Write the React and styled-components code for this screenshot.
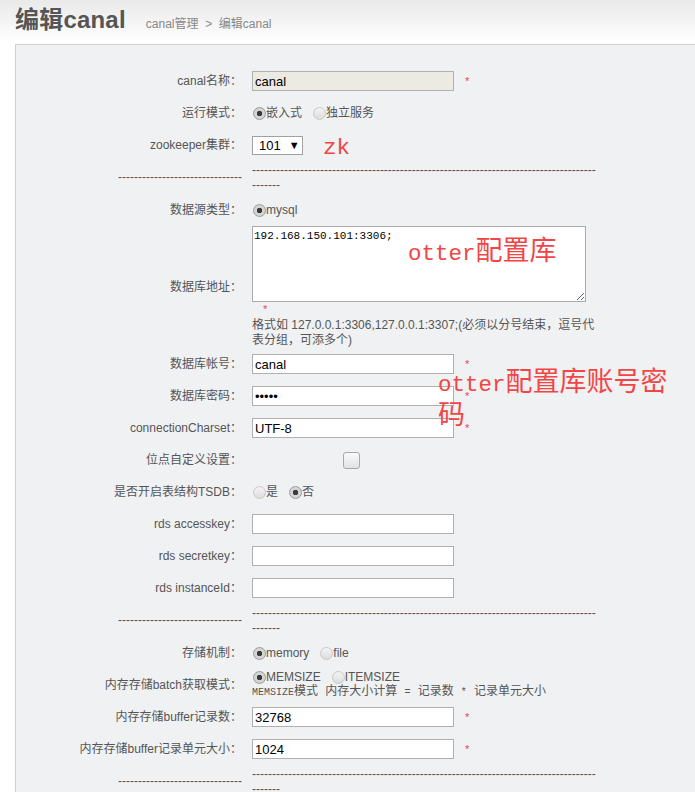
import React from 'react'
import styled, { createGlobalStyle } from 'styled-components'

const GlobalStyle = createGlobalStyle`
    html, body {
        margin: 0;
        padding: 0;
        overflow: hidden;
        background: #fff;
    }
    body {
        font-family: "Liberation Sans", "Noto Sans CJK SC", sans-serif;
        font-size: 12px;
        color: #555;
    }
`;

const SEP_LEFT = '-'.repeat(31)
const SEP_RIGHT = '-'.repeat(86)

export default function App() {
    return (
        <Page>
            <GlobalStyle />
            <Header>
                <Title>编辑canal</Title>
                <Crumbs>canal管理 &nbsp;&gt;&nbsp; 编辑canal</Crumbs>
            </Header>
            <Panel>
                <Row>
                    <Label>canal名称：</Label>
                    <Field>
                        <TextInput readOnly disabledLook defaultValue="canal" />
                        <Star>*</Star>
                    </Field>
                </Row>
                <Row>
                    <Label>运行模式：</Label>
                    <Field>
                        <Radio checked>嵌入式</Radio>
                        <Radio>独立服务</Radio>
                    </Field>
                </Row>
                <Row>
                    <Label>zookeeper集群：</Label>
                    <Field>
                        <FakeSelect>101<Arrow>▼</Arrow></FakeSelect>
                    </Field>
                </Row>
                <Separator />
                <Row>
                    <Label>数据源类型：</Label>
                    <Field>
                        <Radio checked>mysql</Radio>
                    </Field>
                </Row>
                <Row>
                    <Label>数据库地址：</Label>
                    <Field>
                        <Area readOnly defaultValue="192.168.150.101:3306;" />
                        <AreaStar>*</AreaStar>
                        <Help>格式如 127.0.0.1:3306,127.0.0.1:3307;(必须以分号结束，逗号代表分组，可添多个)</Help>
                    </Field>
                </Row>
                <Row>
                    <Label>数据库帐号：</Label>
                    <Field>
                        <TextInput readOnly defaultValue="canal" />
                        <Star>*</Star>
                    </Field>
                </Row>
                <Row>
                    <Label>数据库密码：</Label>
                    <Field>
                        <TextInput readOnly type="password" defaultValue="canal" />
                        <Star>*</Star>
                    </Field>
                </Row>
                <Row>
                    <Label>connectionCharset：</Label>
                    <Field>
                        <TextInput readOnly defaultValue="UTF-8" />
                        <Star>*</Star>
                    </Field>
                </Row>
                <Row>
                    <Label>位点自定义设置：</Label>
                    <Field>
                        <Checkbox />
                    </Field>
                </Row>
                <Row>
                    <Label>是否开启表结构TSDB：</Label>
                    <Field>
                        <Radio>是</Radio>
                        <Radio checked>否</Radio>
                    </Field>
                </Row>
                <Row>
                    <Label>rds accesskey：</Label>
                    <Field><TextInput readOnly defaultValue="" /></Field>
                </Row>
                <Row>
                    <Label>rds secretkey：</Label>
                    <Field><TextInput readOnly defaultValue="" /></Field>
                </Row>
                <Row>
                    <Label>rds instanceId：</Label>
                    <Field><TextInput readOnly defaultValue="" /></Field>
                </Row>
                <Separator />
                <Row>
                    <Label>存储机制：</Label>
                    <Field>
                        <Radio checked>memory</Radio>
                        <Radio>file</Radio>
                    </Field>
                </Row>
                <Row>
                    <Label>内存存储batch获取模式：</Label>
                    <Field>
                        <Line>
                            <Radio checked>MEMSIZE</Radio>
                            <Radio>ITEMSIZE</Radio>
                        </Line>
                        <MonoNote><Narrow>MEMSIZE</Narrow>模式 内存大小计算 <Narrow>=</Narrow> 记录数 <Narrow>*</Narrow> 记录单元大小</MonoNote>
                    </Field>
                </Row>
                <Row>
                    <Label>内存存储buffer记录数：</Label>
                    <Field>
                        <TextInput readOnly defaultValue="32768" />
                        <Star>*</Star>
                    </Field>
                </Row>
                <Row>
                    <Label>内存存储buffer记录单元大小：</Label>
                    <Field>
                        <TextInput readOnly defaultValue="1024" />
                        <Star>*</Star>
                    </Field>
                </Row>
                <Separator />
                <Row />
            </Panel>

            <Note style={{ left: 323, top: 130 }}><Latin>zk</Latin></Note>
            <Note style={{ left: 408, top: 236 }}><Latin>otter</Latin>配置库</Note>
            <Note style={{ left: 438, top: 367 }}><Latin>otter</Latin>配置库账号密<br />码</Note>
        </Page>
    )
}

function Separator() {
    return (
        <Row sep>
            <Label>{SEP_LEFT}</Label>
            <Field>{SEP_RIGHT}<br />-------</Field>
        </Row>
    )
}

function Radio({ checked, children }) {
    return (
        <RadioItem>
            <Dot checked={checked} />
            {children}
        </RadioItem>
    )
}


/** STYLED COMPONENTS */

const Page = styled.div`
    position: relative;
    min-height: 792px;
    background: linear-gradient(#e9e9e9 0, #fff 42px);
`;

const Header = styled.div`
    height: 44px;
    padding-left: 15px;
    display: flex;
    align-items: baseline;
    box-sizing: border-box;
    padding-top: 2px;
`;

const Title = styled.h1`
    margin: 0;
    font-size: 24px;
    font-weight: 700;
    color: #555;
    line-height: 36px;
    letter-spacing: 0.2px;
`;

const Crumbs = styled.span`
    margin-left: 20px;
    font-size: 12px;
    color: #888;
`;

const Panel = styled.div`
    margin-left: 15px;
    width: 760px;
    border: 1px solid #cfcfcf;
    border-right: none;
    background: #f0f1f3;
    padding-top: 20px;
    min-height: 760px;
`;

const Row = styled.div`
    display: grid;
    grid-template-columns: 226px 345px;
    column-gap: 10px;
    align-items: center;
    min-height: ${p => (p.sep ? '33px' : '32px')};
    line-height: 15px;
`;

const Label = styled.div`
    text-align: right;
    white-space: nowrap;
    color: #555;
`;

const Field = styled.div`
    display: flex;
    flex-wrap: wrap;
    align-items: center;
    color: #555;
`;

const TextInput = styled.input.withConfig({ shouldForwardProp: p => p !== 'disabledLook' })`
    box-sizing: border-box;
    width: 202px;
    height: 20px;
    margin: 0;
    padding: 0 2px;
    border: 1px solid #b0b0b0;
    background: ${p => (p.disabledLook ? '#ebebe4' : '#fff')};
    font-family: "Liberation Sans", "Noto Sans CJK SC", sans-serif;
    font-size: 13px;
    color: #000;
    outline: none;
`;

const Star = styled.span`
    margin-left: 11px;
    color: #f03c6a;
    font-size: 11px;
    line-height: 12px;
    align-self: center;
`;

const AreaStar = styled(Star)`
    display: block;
    width: 100%;
    height: 16px;
    line-height: 14px;
    margin-left: 11px;
`;

const Area = styled.textarea`
    display: block;
    box-sizing: border-box;
    width: 334px;
    height: 76px;
    margin: 0;
    padding: 2px 1px;
    border: 1px solid #ababab;
    background: #fff;
    font-family: "Liberation Mono", "Noto Sans CJK SC", monospace;
    font-size: 11px;
    line-height: 14px;
    color: #000;
    outline: none;
`;

const Help = styled.div`
    width: 345px;
    line-height: 15px;
    color: #555;
`;

const RadioItem = styled.label`
    display: inline-flex;
    align-items: center;
    margin-right: 10px;
    color: #555;
`;

const Dot = styled.span.withConfig({ shouldForwardProp: p => p !== 'checked' })`
    box-sizing: border-box;
    width: 13px;
    height: 13px;
    margin-left: 1px;
    border-radius: 50%;
    border: 1px solid ${p => (p.checked ? '#9a9a9a' : '#c8c8c8')};
    background: ${p => (p.checked
        ? 'radial-gradient(circle, #3a3a3a 0 2.5px, #d4d4d4 3px)'
        : 'linear-gradient(#f4f4f4, #dcdcdc)')};
`;

const FakeSelect = styled.div`
    box-sizing: border-box;
    width: 51px;
    height: 19px;
    border: 1px solid #a0a0a0;
    background: #fff;
    padding-left: 6px;
    font-size: 13px;
    line-height: 17px;
    color: #000;
    display: flex;
    align-items: center;
`;

const Arrow = styled.span`
    margin-left: 8px;
    font-size: 11px;
`;

const Checkbox = styled.span`
    box-sizing: border-box;
    width: 17px;
    height: 17px;
    margin-left: 91px;
    border: 1px solid #a8a8a8;
    border-radius: 3px;
    background: linear-gradient(#fafafa, #e2e2e2);
`;

const Line = styled.div`
    width: 100%;
    display: flex;
`;

const MonoNote = styled.div`
    width: 100%;
    font-family: "Liberation Mono", "Noto Sans CJK SC", monospace;
    font-size: 12px;
    line-height: 15px;
    color: #555;
    white-space: nowrap;
`;

const Narrow = styled.span`
    font-size: 10px;
`;

const Note = styled.div`
    position: absolute;
    font-family: "Liberation Serif", "Noto Sans CJK SC", serif;
    font-size: 27px;
    line-height: 30px;
    color: #f24545;
    white-space: nowrap;
`;

const Latin = styled.span`
    font-family: "Liberation Mono", monospace;
    font-size: 22.5px;
`;
